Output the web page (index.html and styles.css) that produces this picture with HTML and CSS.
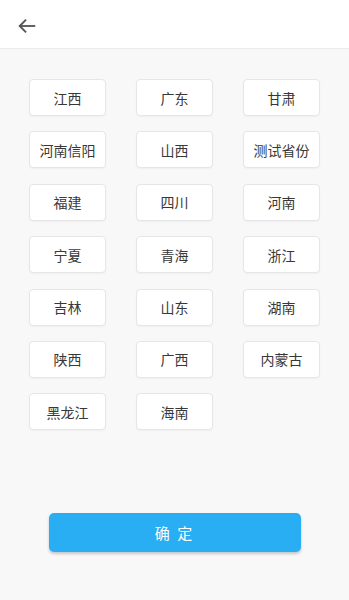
FILE: index.html
```html
<!DOCTYPE html>
<html>
<head>
    <meta charset="utf-8">
    <link rel="stylesheet" href="styles.css">
</head>
<body>
    <div class="header">
        <button class="back-button">
            <svg viewBox="0 0 24 24" fill="none" stroke="currentColor" stroke-width="2" stroke-linecap="square">
                <line x1="20" y1="12" x2="5" y2="12"></line>
                <polyline points="11,5 4,12 11,19" stroke-linecap="butt" stroke-linejoin="miter"></polyline>
            </svg>
        </button>
    </div>

    <div class="content">
        <div class="province-grid">
            <div class="province">江西</div>
            <div class="province">广东</div>
            <div class="province">甘肃</div>
            <div class="province">河南信阳</div>
            <div class="province">山西</div>
            <div class="province">测试省份</div>
            <div class="province">福建</div>
            <div class="province">四川</div>
            <div class="province">河南</div>
            <div class="province">宁夏</div>
            <div class="province">青海</div>
            <div class="province">浙江</div>
            <div class="province">吉林</div>
            <div class="province">山东</div>
            <div class="province">湖南</div>
            <div class="province">陕西</div>
            <div class="province">广西</div>
            <div class="province">内蒙古</div>
            <div class="province">黑龙江</div>
            <div class="province">海南</div>
        </div>

        <button class="confirm-button">确 定</button>
    </div>
</body>
</html>
```

FILE: styles.css
```css
:root {
    --background: #f8f8f8;
    --text-primary: #383838;
    --border: #e6e6e6;
    --primary: #29aef3;
}

body {
    margin: 0;
    height: 600px;
    font-family: Roboto, "Noto Sans CJK SC", sans-serif;
    background-color: var(--background);
    color: var(--text-primary);
}

.header {
    height: 48px;
    display: flex;
    align-items: center;
    padding-left: 16px;
    background: white;
    border-bottom: 1px solid #ebebeb;
}

.back-button {
    width: 22px;
    height: 22px;
    padding: 0;
    margin-top: 4px;
    border: none;
    background: none;
    color: #555555;
}

.back-button svg {
    width: 22px;
    height: 22px;
    display: block;
}

.content {
    padding: 30px 29px 0;
}

.province-grid {
    display: grid;
    grid-template-columns: repeat(3, 77px);
    column-gap: 30px;
    row-gap: 15.4px;
}

.province {
    height: 35px;
    display: flex;
    align-items: center;
    justify-content: center;
    background: white;
    border: 1px solid var(--border);
    border-radius: 4px;
    box-shadow: 0 1px 2px rgba(0, 0, 0, 0.04);
    font-size: 14px;
}

.confirm-button {
    display: block;
    width: 252px;
    height: 39px;
    margin: 83px auto 0;
    border: none;
    border-radius: 5px;
    background: var(--primary);
    color: white;
    font-family: inherit;
    font-size: 15px;
    letter-spacing: 2px;
    box-shadow: 0 2px 3px rgba(0, 0, 0, 0.2);
}
```
